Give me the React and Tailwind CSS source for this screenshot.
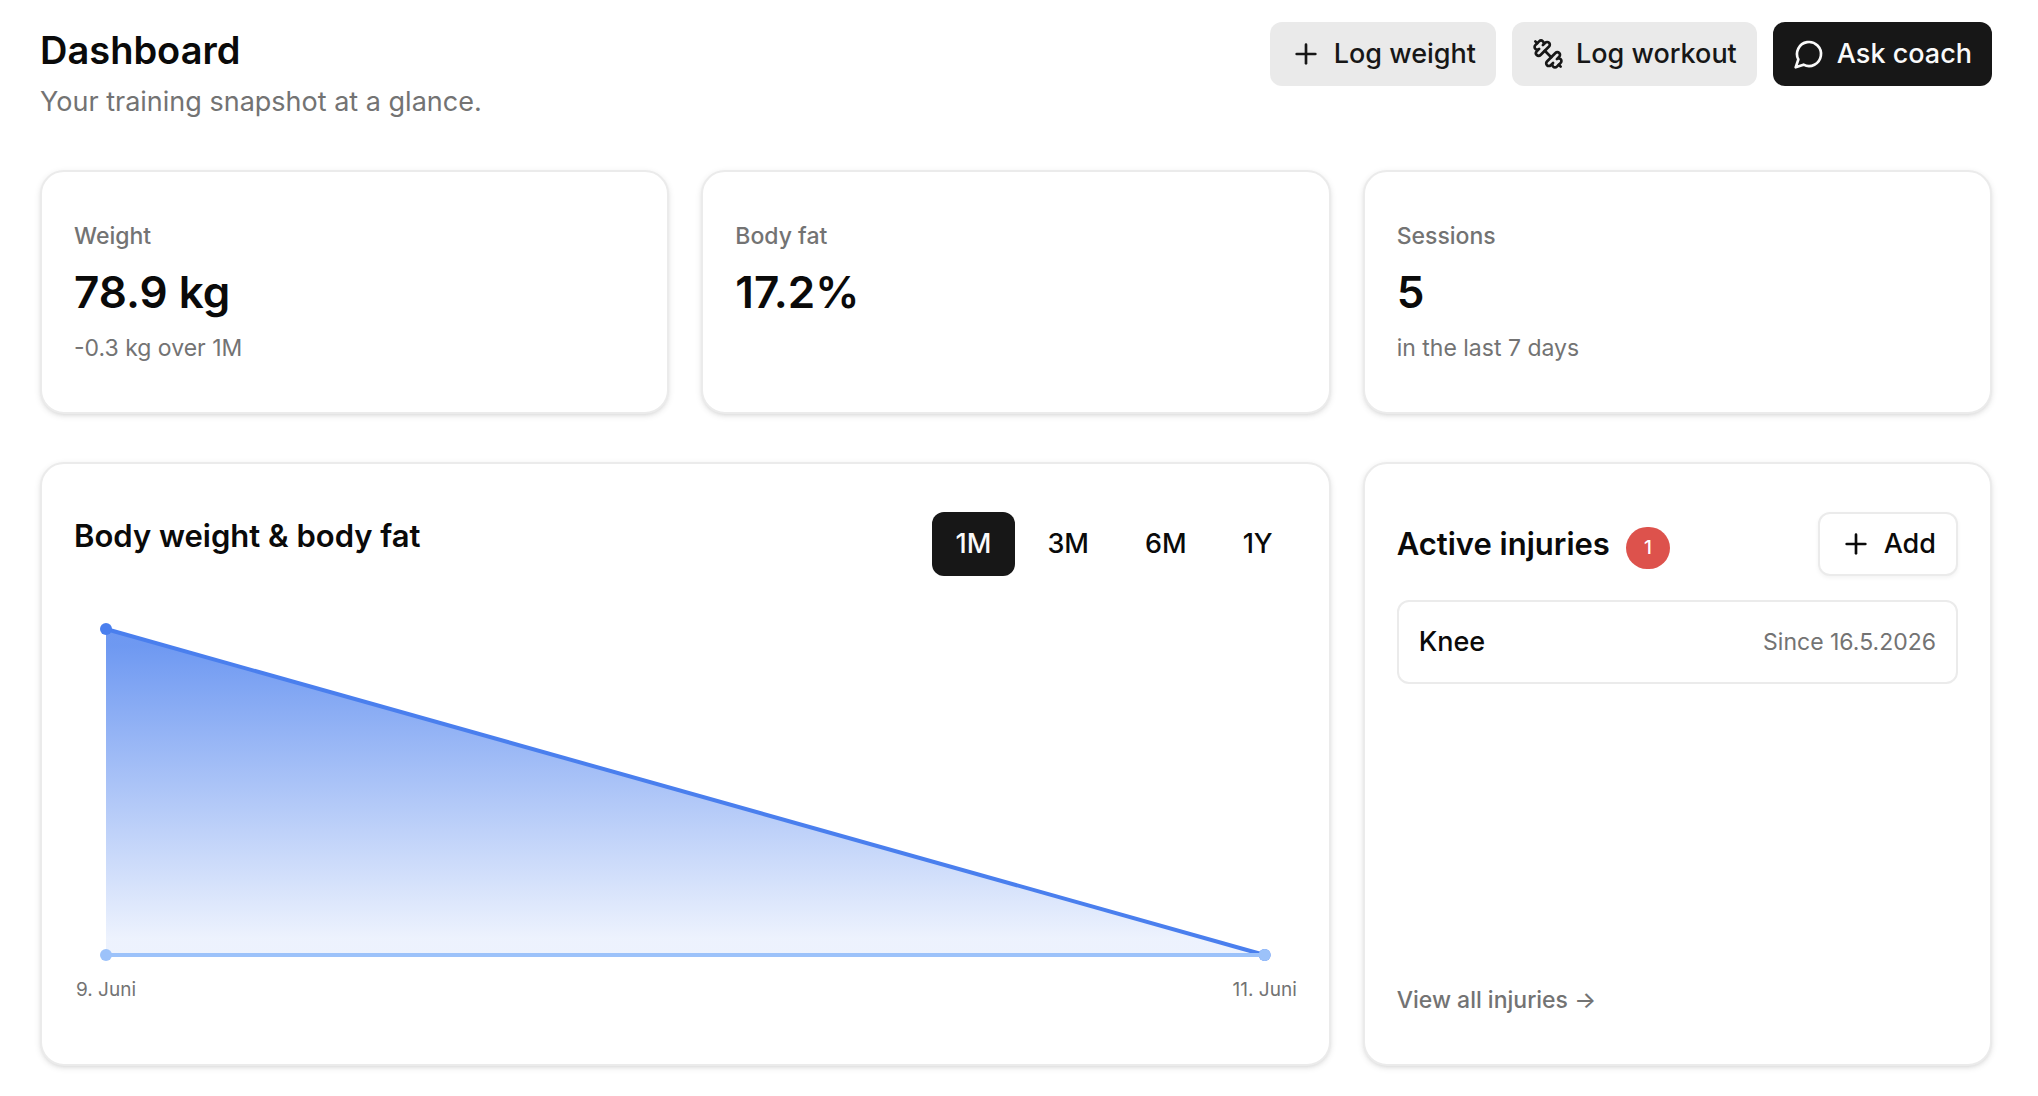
import React, { useState } from "react";
import clsx from "clsx";
import { Plus } from "lucide-react";

const DumbbellIcon = ({ className }) => (
  <svg
    className={className}
    viewBox="0 0 24 24"
    fill="none"
    stroke="currentColor"
    strokeWidth="2"
    strokeLinecap="round"
    strokeLinejoin="round"
    aria-hidden="true"
  >
    <path d="M14.4 14.4 9.6 9.6" />
    <path d="M18.657 21.485a2 2 0 1 1-2.829-2.828l-1.767 1.768a2 2 0 1 1-2.829-2.829l6.364-6.364a2 2 0 1 1 2.829 2.829l-1.768 1.767a2 2 0 1 1 2.828 2.829z" />
    <path d="m21.5 21.5-1.4-1.4" />
    <path d="M3.9 3.9 2.5 2.5" />
    <path d="M6.404 12.768a2 2 0 1 1-2.829-2.829l1.768-1.767a2 2 0 1 1-2.828-2.829l2.828-2.828a2 2 0 1 1 2.829 2.828l1.767-1.768a2 2 0 1 1 2.829 2.829z" />
  </svg>
);

const ChatIcon = ({ className }) => (
  <svg
    className={className}
    viewBox="0 0 24 24"
    fill="none"
    stroke="currentColor"
    strokeWidth="2"
    strokeLinecap="round"
    strokeLinejoin="round"
    aria-hidden="true"
  >
    <path d="M7.9 20A9 9 0 1 0 4 16.1L2 22Z" />
  </svg>
);

const BUTTON_STYLES = {
  primary: "bg-[#171717] px-5 text-neutral-50",
  secondary: "bg-[#eaeaea] px-5 text-[#171717]",
  outline: "border-2 border-[#ebebeb] bg-white px-5 text-neutral-950 shadow-[0_2px_4px_rgba(0,0,0,0.05)]",
};

const Button = ({ variant, icon, children }) => (
  <button
    type="button"
    className={clsx(
      "flex h-16 items-center justify-center gap-3 rounded-xl text-[27px] font-medium whitespace-nowrap",
      BUTTON_STYLES[variant]
    )}
  >
    {icon}
    {children}
  </button>
);

const Card = ({ className, children }) => (
  <section
    className={clsx(
      "flex flex-col rounded-3xl border-2 border-[#ebebeb] bg-white px-8 py-12",
      "shadow-[0_2px_6px_rgba(0,0,0,0.1),0_2px_4px_-2px_rgba(0,0,0,0.1)]",
      className
    )}
  >
    {children}
  </section>
);

const StatCard = ({ label, value, hint }) => (
  <Card className="gap-2">
    <p className="text-[23px] leading-8 font-medium text-[#737373]">{label}</p>
    <p className="text-[44px] leading-16 font-semibold">{value}</p>
    {hint && <p className="text-[23px] leading-8 text-[#737373]">{hint}</p>}
  </Card>
);

const RANGES = ["1M", "3M", "6M", "1Y"];

const RangePicker = ({ value, onChange }) => (
  <div className="flex gap-2">
    {RANGES.map((range) => (
      <button
        key={range}
        type="button"
        aria-pressed={range === value}
        onClick={() => onChange(range)}
        className={clsx(
          "h-16 rounded-xl px-6 text-[27px] font-medium",
          range === value ? "bg-[#171717] text-neutral-50" : "text-neutral-950"
        )}
      >
        {range}
      </button>
    ))}
  </div>
);

const SERIES = [
  { id: "weight", color: "#4a7fee", points: [0, 100] },
  { id: "fat", color: "#9cc2fa", points: [100, 100] },
];

const DATES = ["9. Juni", "11. Juni"];

const BodyChart = () => (
  <div className="px-8 pt-[21px] pb-[61px]">
    <svg
      className="h-[326px] w-full overflow-visible"
      role="img"
      aria-label="Body weight and body fat over time"
    >
      <defs>
        <linearGradient id="fillWeight" x1="0" y1="0" x2="0" y2="1">
          <stop offset="5%" stopColor="#4a7fee" stopOpacity="0.8" />
          <stop offset="95%" stopColor="#4a7fee" stopOpacity="0.1" />
        </linearGradient>
      </defs>
      <svg width="100%" height="100%" viewBox="0 0 100 100" preserveAspectRatio="none">
        <polygon points="0,0 100,100 0,100" fill="url(#fillWeight)" />
      </svg>
      {SERIES.map(({ id, color, points }) => (
        <g key={id}>
          <line
            x1="0%"
            y1={`${points[0]}%`}
            x2="100%"
            y2={`${points[1]}%`}
            stroke={color}
            strokeWidth="4"
          />
          <circle cx="0%" cy={`${points[0]}%`} r="6" fill={color} />
          <circle cx="100%" cy={`${points[1]}%`} r="6" fill={color} />
        </g>
      ))}
      {DATES.map((date, index) => (
        <text
          key={date}
          x={index === 0 ? "0%" : "100%"}
          y="367"
          textAnchor="middle"
          className="fill-[#737373] text-[19px]"
        >
          {date}
        </text>
      ))}
    </svg>
  </div>
);

const InjuriesCard = ({ injuries }) => (
  <Card className="gap-6">
    <div className="flex items-center justify-between">
      <h2 className="flex items-center gap-4 text-[31px] font-semibold">
        Active injuries
        <span className="mt-2 flex h-[42px] min-w-11 items-center justify-center rounded-full bg-[#dd524c] text-[19px] font-medium text-white">
          {injuries.length}
        </span>
      </h2>
      <Button variant="outline" icon={<Plus className="size-8" />}>
        Add
      </Button>
    </div>
    <ul className="flex flex-col gap-4">
      {injuries.map(({ name, since }) => (
        <li
          key={name}
          className="flex h-21 items-center justify-between rounded-xl border-2 border-[#ebebeb] px-5"
        >
          <span className="text-[27px] font-medium">{name}</span>
          <span className="text-[23px] text-[#737373]">Since {since}</span>
        </li>
      ))}
    </ul>
    <a href="#injuries" className="mt-auto self-start text-[23px] leading-8 font-medium text-[#737373]">
      View all injuries →
    </a>
  </Card>
);

const STATS = [
  { label: "Weight", value: "78.9 kg", hint: "-0.3 kg over 1M" },
  { label: "Body fat", value: "17.2%" },
  { label: "Sessions", value: "5", hint: "in the last 7 days" },
];

const INJURIES = [{ name: "Knee", since: "16.5.2026" }];

const App = () => {
  const [range, setRange] = useState("1M");

  return (
    <main className="flex min-h-screen flex-col gap-12 bg-white pt-[22px] pr-[46px] pb-[30px] pl-10 font-['Inter',sans-serif] text-neutral-950">
      <header className="flex items-start justify-between">
        <div className="flex flex-col gap-1">
          <h1 className="text-[38px] leading-14 font-semibold">Dashboard</h1>
          <p className="text-[27px] leading-10 text-[#737373]">Your training snapshot at a glance.</p>
        </div>
        <div className="flex gap-4">
          <Button variant="secondary" icon={<Plus className="size-8" />}>
            Log weight
          </Button>
          <Button variant="secondary" icon={<DumbbellIcon className="size-8" />}>
            Log workout
          </Button>
          <Button variant="primary" icon={<ChatIcon className="size-8" />}>
            Ask coach
          </Button>
        </div>
      </header>

      <div className="grid grid-cols-3 gap-8">
        {STATS.map((stat) => (
          <StatCard key={stat.label} {...stat} />
        ))}
      </div>

      <div className="grid grid-cols-3 gap-8">
        <Card className="col-span-2 gap-8">
          <div className="flex items-start justify-between">
            <h2 className="text-[31px] leading-12 font-semibold">Body weight & body fat</h2>
            <RangePicker value={range} onChange={setRange} />
          </div>
          <BodyChart />
        </Card>
        <InjuriesCard injuries={INJURIES} />
      </div>
    </main>
  );
};

export default App;
